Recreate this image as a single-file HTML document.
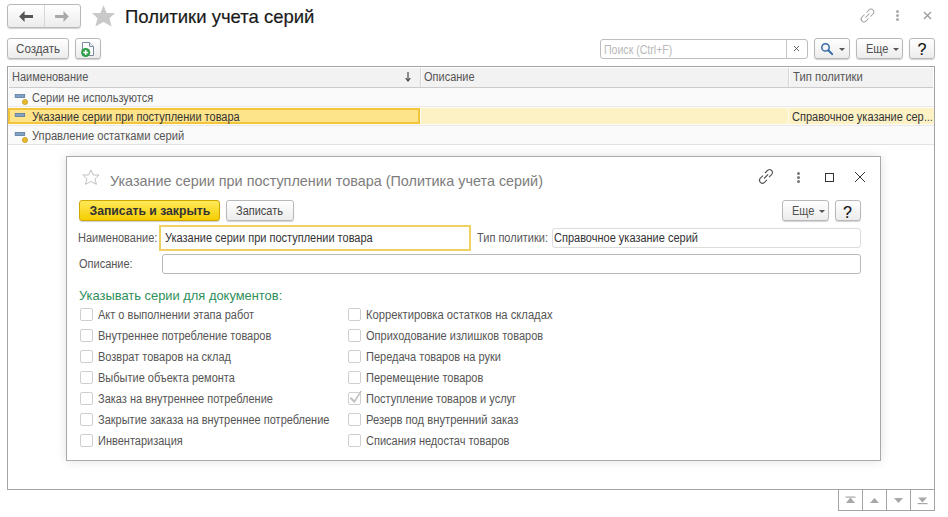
<!DOCTYPE html>
<html><head><meta charset="utf-8">
<style>
*{box-sizing:border-box;margin:0;padding:0}
html,body{width:948px;height:517px;overflow:hidden;background:#fff;font-family:"Liberation Sans",sans-serif;font-size:11px;color:#555}
.a{position:absolute}
.t{position:absolute;white-space:nowrap;line-height:1;font-size:12.5px;transform:scaleX(.88);transform-origin:0 0}
.btn{position:absolute;border:1px solid #b9b9b9;border-radius:3px;background:linear-gradient(#ffffff,#ececec);box-shadow:0 1px 1px rgba(0,0,0,.18)}
.hl{position:absolute;height:1px;background:#e6e6e6}
.cb{position:absolute;width:13px;height:13px;border:1px solid #cfcfcf;border-radius:2px;background:#fff}
</style></head><body>

<!-- nav group -->
<div class="btn" style="left:7px;top:4px;width:74px;height:24px"></div>
<div class="a" style="left:44px;top:5px;width:1px;height:22px;background:#d8d8d8"></div>
<svg class="a" style="left:18px;top:10px" width="16" height="13" viewBox="0 0 16 13"><path d="M1.1 6.5 L6.6 1.1 L6.6 5.1 L15 5.1 L15 7.9 L6.6 7.9 L6.6 11.9 Z" fill="#555"/></svg>
<svg class="a" style="left:54px;top:10px" width="16" height="13" viewBox="0 0 16 13"><path d="M14.8 6.5 L9.5 1.1 L9.5 5.1 L1.1 5.1 L1.1 7.9 L9.5 7.9 L9.5 11.9 Z" fill="#a9a9a9"/></svg>
<!-- star -->
<svg class="a" style="left:85px;top:0px" width="40" height="32" viewBox="0 0 40 32"><path d="M18.5 5.3 L21.6 13.1 L30 13.1 L24.5 18.3 L26.6 26.6 L18.5 22 L10.4 26.6 L12.5 18.3 L7 13.1 L15.4 13.1 Z" fill="#c9c9c9"/></svg>
<div class="t" style="left:125px;top:8px;font-size:18.5px;color:#1a1a1a;transform:none;-webkit-text-stroke:0.2px #1a1a1a">Политики учета серий</div>

<!-- top right icons -->
<svg class="a" style="left:859px;top:7px" width="17" height="17" viewBox="0 0 17 17"><g fill="none" stroke="#a0a0a0" stroke-width="1.05"><path d="M7.5 5.5 L10 3 A2.5 2.5 0 0 1 14 7 L11.5 9.5"/><path d="M9.5 11.5 L7 14 A2.5 2.5 0 0 1 3 10 L5.5 7.5"/><path d="M6.5 10.5 L10.5 6.5"/></g></svg>
<div class="a" style="left:896px;top:10px;width:3px;height:3px;border-radius:50%;background:#aaa"></div>
<div class="a" style="left:896px;top:14px;width:3px;height:3px;border-radius:50%;background:#aaa"></div>
<div class="a" style="left:896px;top:18px;width:3px;height:3px;border-radius:50%;background:#aaa"></div>
<svg class="a" style="left:923px;top:11px" width="9" height="9" viewBox="0 0 9 9"><path d="M1 1 L8 8 M8 1 L1 8" stroke="#999" stroke-width="1.3"/></svg>

<!-- command bar -->
<div class="btn" style="left:7px;top:38px;width:62px;height:21px"></div>
<div class="t" style="left:16px;top:43px;color:#505050;transform:scaleX(.93)">Создать</div>
<div class="btn" style="left:75px;top:38px;width:26px;height:21px"></div>
<svg class="a" style="left:79px;top:40px" width="18" height="18" viewBox="0 0 18 18"><path d="M3.5 2.5 H10.5 L14.5 6.5 V15.5 H3.5 Z" fill="#fbfbfb" stroke="#7d8ba0" stroke-width="1"/><path d="M10.5 2.5 V6.5 H14.5" fill="#e8ecf0" stroke="#7d8ba0" stroke-width="1"/><circle cx="6.7" cy="12.5" r="4.6" fill="#2e9e48"/><path d="M6.7 10 V15 M4.2 12.5 H9.2" stroke="#fff" stroke-width="1.6"/></svg>

<div class="a" style="left:600px;top:39px;width:208px;height:20px;border:1px solid #bdbdbd;border-radius:3px;background:#fff"></div>
<div class="a" style="left:786px;top:40px;width:1px;height:18px;background:#c8c8c8"></div>
<div class="t" style="left:603.6px;top:43.7px;color:#b8b8b8;transform:scaleX(.845)">Поиск (Ctrl+F)</div>
<svg class="a" style="left:793px;top:45px" width="7" height="7" viewBox="0 0 7 7"><path d="M1 1 L6 6 M6 1 L1 6" stroke="#505050" stroke-width="0.9"/></svg>
<div class="btn" style="left:814px;top:38px;width:36px;height:21px"></div>
<svg class="a" style="left:820px;top:42px" width="14" height="14" viewBox="0 0 14 14"><circle cx="5.5" cy="5.4" r="3.7" fill="none" stroke="#336aa6" stroke-width="1.5"/><path d="M8.3 8.2 L12.2 12.1" stroke="#336aa6" stroke-width="2" stroke-linecap="round"/></svg>
<svg class="a" style="left:839px;top:48px" width="6" height="3" viewBox="0 0 6 3"><path d="M0 0 H6 L3 3 Z" fill="#555"/></svg>
<div class="btn" style="left:856px;top:38px;width:47px;height:21px"></div>
<div class="t" style="left:866.2px;top:43px;color:#505050">Еще</div>
<svg class="a" style="left:892.5px;top:47.5px" width="6" height="3" viewBox="0 0 6 3"><path d="M0 0 H6 L3 3 Z" fill="#555"/></svg>
<div class="btn" style="left:909px;top:38px;width:26px;height:21px"></div>
<div class="t" style="left:917.4px;top:42.4px;font-size:16px;color:#111;transform:none;-webkit-text-stroke:0.15px #111">?</div>

<!-- table -->
<div class="a" style="left:7px;top:66px;width:928px;height:424px;border:1px solid #a4a4a4;background:#fff"></div>
<div class="a" style="left:9px;top:68px;width:924px;height:20px;background:#f2f2f2;border-bottom:1px solid #cbcbcb"></div>
<div class="a" style="left:420px;top:68px;width:1px;height:19px;background:#d6d6d6"></div>
<div class="a" style="left:421px;top:68px;width:1px;height:19px;background:#fbfbfb"></div>
<div class="a" style="left:788px;top:68px;width:1px;height:19px;background:#d6d6d6"></div>
<div class="a" style="left:789px;top:68px;width:1px;height:19px;background:#fbfbfb"></div>
<div class="t" style="left:12.4px;top:71px">Наименование</div>
<svg class="a" style="left:404px;top:71px" width="8" height="11" viewBox="0 0 8 11"><path d="M4 1 V9.5" stroke="#4a4a4a" stroke-width="1.2"/><path d="M1.7 7.2 L4 10 L6.3 7.2" fill="none" stroke="#4a4a4a" stroke-width="1.2"/></svg>
<div class="t" style="left:424.4px;top:71px">Описание</div>
<div class="t" style="left:793.4px;top:71px;transform:scaleX(.905)">Тип политики</div>
<!-- rows -->
<div class="a" style="left:8px;top:88px;width:926px;height:18px;background:#fafafa"></div>
<div class="hl" style="left:8px;top:106px;width:926px;background:#e9e9e9"></div>
<div class="a" style="left:8px;top:107px;width:926px;height:18px;background:#fdf1c6"></div>
<div class="a" style="left:8px;top:107px;width:926px;height:1px;background:#fdfbf3"></div><div class="a" style="left:8px;top:124px;width:926px;height:1px;background:#fdfbf3"></div>
<div class="a" style="left:420px;top:107px;width:1px;height:18px;background:#fdfaf0"></div><div class="a" style="left:788px;top:107px;width:1px;height:18px;background:#fdfaf0"></div>
<div class="a" style="left:8px;top:108px;width:412px;height:16px;background:#fde38a;border:2px solid #f1c43b"></div>
<div class="hl" style="left:8px;top:125px;width:926px;background:#e9e9e9"></div>
<div class="a" style="left:8px;top:126px;width:926px;height:18px;background:#fafafa"></div>
<div class="hl" style="left:8px;top:144px;width:926px;background:#e2e2e2"></div>

<svg class="a" style="left:14px;top:93px" width="16" height="12" viewBox="0 0 16 12"><rect x="1.2" y="1.5" width="9.5" height="3" fill="#7fa2c6" stroke="#5b7a9c" stroke-width="0.8"/><circle cx="11" cy="9" r="2.6" fill="#e8b92a" stroke="#b98a10" stroke-width="0.6"/></svg>
<div class="t" style="left:32px;top:92px">Серии не используются</div>
<svg class="a" style="left:14px;top:112px" width="16" height="12" viewBox="0 0 16 12"><rect x="1.2" y="1.5" width="9.5" height="3" fill="#7fa2c6" stroke="#5b7a9c" stroke-width="0.8"/></svg>
<div class="t" style="left:32px;top:111px;color:#333">Указание серии при поступлении товара</div>
<div class="t" style="left:792px;top:111px;color:#333">Справочное указание сер<span style="font-size:10.5px;letter-spacing:-1px">…</span></div>
<svg class="a" style="left:14px;top:131px" width="16" height="12" viewBox="0 0 16 12"><rect x="1.2" y="1.5" width="9.5" height="3" fill="#7fa2c6" stroke="#5b7a9c" stroke-width="0.8"/><circle cx="11" cy="9" r="2.6" fill="#e8b92a" stroke="#b98a10" stroke-width="0.6"/></svg>
<div class="t" style="left:32px;top:130px;transform:scaleX(.895)">Управление остатками серий</div>

<!-- scroll buttons -->
<div class="a" style="left:838px;top:490px;width:97px;height:21px;border:1px solid #a4a4a4;border-top:none;background:#fff"></div>
<div class="a" style="left:862px;top:490px;width:1px;height:20px;background:#a4a4a4"></div>
<div class="a" style="left:886px;top:490px;width:1px;height:20px;background:#a4a4a4"></div>
<div class="a" style="left:910px;top:490px;width:1px;height:20px;background:#a4a4a4"></div>
<svg class="a" style="left:845px;top:496px" width="11" height="8" viewBox="0 0 11 8"><rect x="0.5" y="0.5" width="10" height="1.2" fill="#a8a8a8"/><path d="M5.5 1.5 L10 7 H1 Z" fill="#a8a8a8"/></svg>
<svg class="a" style="left:869px;top:497px" width="11" height="7" viewBox="0 0 11 7"><path d="M5.5 1 L10 6 H1 Z" fill="#a8a8a8"/></svg>
<svg class="a" style="left:893px;top:497px" width="11" height="7" viewBox="0 0 11 7"><path d="M5.5 6 L10 1 H1 Z" fill="#a8a8a8"/></svg>
<svg class="a" style="left:917px;top:497px" width="11" height="8" viewBox="0 0 11 8"><path d="M5.5 5.5 L10 0.5 H1 Z" fill="#a8a8a8"/><rect x="0.5" y="6" width="10" height="1.2" fill="#a8a8a8"/></svg>

<!-- dialog -->
<div class="a" style="left:66px;top:156px;width:815px;height:305px;border:1px solid #a9a9a9;background:#fff;box-shadow:0 0 10px rgba(0,0,0,.12)"></div>


<svg class="a" style="left:76px;top:162px" width="30" height="28" viewBox="0 0 30 28"><path d="M14.9 8 L17.2 13 L23 13 L18.9 16.9 L20.4 22.3 L14.9 19.5 L9.4 22.3 L10.9 16.9 L6.8 13 L12.6 13 Z" fill="none" stroke="#b8b8b8" stroke-width="0.9" stroke-linejoin="round"/></svg>
<div class="t" style="left:110px;top:173.6px;font-size:14.4px;color:#7d7d7d;transform:none">Указание серии при поступлении товара (Политика учета серий)</div>
<svg class="a" style="left:757px;top:168px" width="18" height="17" viewBox="0 0 18 17"><g fill="none" stroke="#555" stroke-width="1.1"><path d="M8 5 L10.5 2.5 A2.6 2.6 0 0 1 14.6 6.6 L12 9.2"/><path d="M10 11.8 L7.5 14.3 A2.6 2.6 0 0 1 3.4 10.2 L6 7.6"/><path d="M7 10.5 L11 6.5"/></g></svg>
<div class="a" style="left:797px;top:171.7px;width:3px;height:3px;border-radius:50%;background:#777"></div>
<div class="a" style="left:797px;top:176px;width:3px;height:3px;border-radius:50%;background:#777"></div>
<div class="a" style="left:797px;top:180.3px;width:3px;height:3px;border-radius:50%;background:#777"></div>
<div class="a" style="left:825px;top:173px;width:9px;height:9px;border:1.2px solid #333"></div>
<svg class="a" style="left:854px;top:171px" width="12" height="12" viewBox="0 0 12 12"><path d="M1 1 L11 11 M11 1 L1 11" stroke="#333" stroke-width="1.0"/></svg>

<div class="a" style="left:79px;top:200px;width:141px;height:21px;border:1px solid #d0a800;border-radius:3px;background:linear-gradient(#ffe95a,#f5cd00);box-shadow:0 1px 1px rgba(0,0,0,.2)"></div>
<div class="t" style="left:89.5px;top:205.3px;font-size:12.2px;font-weight:bold;color:#333;transform:none">Записать и закрыть</div>
<div class="btn" style="left:226px;top:200px;width:68px;height:21px"></div>
<div class="t" style="left:236px;top:205px;color:#444">Записать</div>
<div class="btn" style="left:782px;top:200px;width:47px;height:21px"></div>
<div class="t" style="left:792px;top:205px;color:#505050">Еще</div>
<svg class="a" style="left:818.5px;top:209.5px" width="6" height="3" viewBox="0 0 6 3"><path d="M0 0 H6 L3 3 Z" fill="#555"/></svg>
<div class="btn" style="left:835px;top:200px;width:26px;height:21px"></div>
<div class="t" style="left:843px;top:204.6px;font-size:16px;color:#111;transform:none;-webkit-text-stroke:0.15px #111">?</div>

<div class="t" style="left:78.2px;top:232px">Наименование:</div>
<div class="a" style="left:159px;top:225px;width:312px;height:26px;border:2px solid #f0d060;background:#fff"></div>
<div class="t" style="left:165.3px;top:232px;color:#333;transform:scaleX(.88)">Указание серии при поступлении товара</div>
<div class="t" style="left:477px;top:232px">Тип политики:</div>
<div class="a" style="left:552px;top:228px;width:309px;height:20px;border:1px solid #dcdcdc;border-radius:3px;background:#fff"></div>
<div class="t" style="left:554.3px;top:232px;color:#333">Справочное указание серий</div>
<div class="t" style="left:79px;top:258px">Описание:</div>
<div class="a" style="left:162px;top:254px;width:699px;height:20px;border:1px solid #b9b9b9;border-radius:3px;background:#fff"></div>

<div class="t" style="left:79px;top:288.5px;font-size:13.5px;color:#2e8f5a;transform:scaleX(.955)">Указывать серии для документов:</div>
<div class="cb" style="left:80px;top:308px"></div><div class="t" style="left:98px;top:309px">Акт о выполнении этапа работ</div>
<div class="cb" style="left:348px;top:308px"></div><div class="t" style="left:366px;top:309px;transform:scaleX(.897)">Корректировка остатков на складах</div>
<div class="cb" style="left:80px;top:329px"></div><div class="t" style="left:98px;top:330px">Внутреннее потребление товаров</div>
<div class="cb" style="left:348px;top:329px"></div><div class="t" style="left:366px;top:330px">Оприходование излишков товаров</div>
<div class="cb" style="left:80px;top:350px"></div><div class="t" style="left:98px;top:351px">Возврат товаров на склад</div>
<div class="cb" style="left:348px;top:350px"></div><div class="t" style="left:366px;top:351px">Передача товаров на руки</div>
<div class="cb" style="left:80px;top:371px"></div><div class="t" style="left:98px;top:372px">Выбытие объекта ремонта</div>
<div class="cb" style="left:348px;top:371px"></div><div class="t" style="left:366px;top:372px">Перемещение товаров</div>
<div class="cb" style="left:80px;top:392px"></div><div class="t" style="left:98px;top:393px">Заказ на внутреннее потребление</div>
<div class="cb" style="left:348px;top:392px"></div><div class="t" style="left:366px;top:393px">Поступление товаров и услуг</div>
<div class="cb" style="left:80px;top:413px"></div><div class="t" style="left:98px;top:414px">Закрытие заказа на внутреннее потребление</div>
<div class="cb" style="left:348px;top:413px"></div><div class="t" style="left:366px;top:414px;transform:scaleX(.897)">Резерв под внутренний заказ</div>
<div class="cb" style="left:80px;top:434px"></div><div class="t" style="left:98px;top:435px">Инвентаризация</div>
<div class="cb" style="left:348px;top:434px"></div><div class="t" style="left:366px;top:435px">Списания недостач товаров</div>
<svg class="a" style="left:349px;top:389px" width="15" height="16" viewBox="0 0 15 16"><path d="M0.6 9.4 L2.2 8 L5.4 11 L11.5 1.6 L12.8 2.6 L5.5 14.2 Z" fill="#c4c4c4"/></svg>
</body></html>
